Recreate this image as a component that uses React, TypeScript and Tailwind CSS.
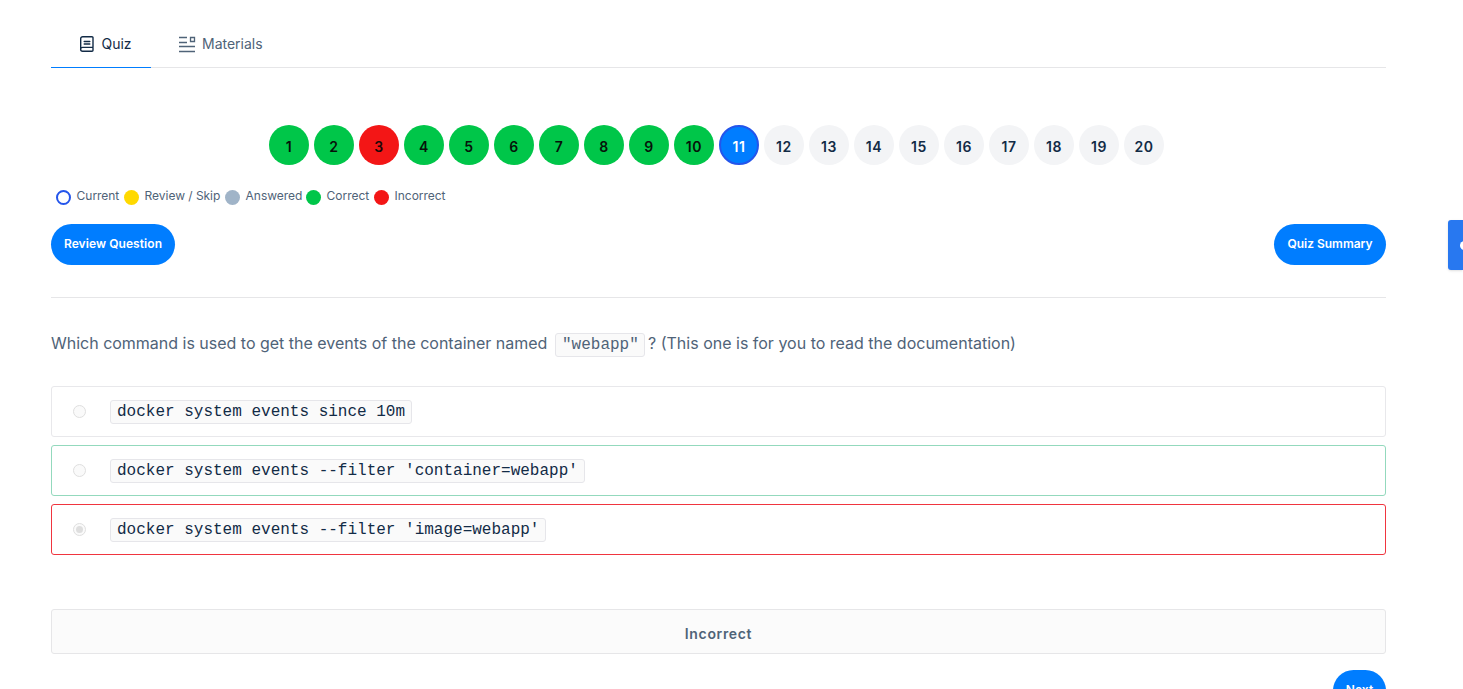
import React from "react";

type Status = "correct" | "incorrect" | "current" | "pending";

const statusOf = (n: number): Status =>
  n === 3 ? "incorrect" : n < 11 ? "correct" : n === 11 ? "current" : "pending";

const statusClass: Record<Status, string> = {
  correct: "bg-[#00c649] text-[#06120a]",
  incorrect: "bg-[#f31616] text-[#1c0808]",
  current: "bg-[#007dff] border-2 border-[#2455eb] text-white",
  pending: "bg-[#f3f4f6] text-[#122b46]",
};

const legend = [
  { label: "Current", dot: "border-2 border-[#2455eb]", width: "w-[42px]" },
  { label: "Review / Skip", dot: "bg-[#ffd900]", width: "w-[75px]" },
  { label: "Answered", dot: "bg-[#a0b4c8]", width: "w-[55px]" },
  { label: "Correct", dot: "bg-[#00c649]", width: "w-[42px]" },
  { label: "Incorrect", dot: "bg-[#f31616]", width: "w-[52px]" },
];

const options = [
  { code: "docker system events since 10m", border: "border-[#e8e8eb]", checked: false },
  { code: "docker system events --filter 'container=webapp'", border: "border-[#93d9bd]", checked: false },
  { code: "docker system events --filter 'image=webapp'", border: "border-[#f0353f]", checked: true },
];

function QuizIcon() {
  return (
    <svg width="16" height="18" viewBox="0 0 16 18" fill="none" stroke="currentColor" strokeWidth="1.4" strokeLinecap="round" strokeLinejoin="round">
      <path d="M14 12V2.7a1 1 0 0 0-1-1H3.7a2 2 0 0 0-2 2v10.8M14 12.4H3.6a1.95 1.95 0 0 0 0 3.9H13a1 1 0 0 0 1-1zM5.2 6.5h5.6M5.2 9h5.6" />
    </svg>
  );
}

function MaterialsIcon() {
  return (
    <svg width="17" height="18" viewBox="0 0 17 18" fill="none" stroke="currentColor" strokeWidth="1.3">
      <path d="M0 2.5h8M0 7.5h8M0 11.5h16M0 16.5h16M11.5 2.5h4v4h-4z" />
    </svg>
  );
}

export default function App() {
  return (
    <div className="flex h-[689px] w-full overflow-hidden bg-white pl-[51px] font-['Inter','Liberation_Sans',sans-serif] text-[#4f6378]">
      <main className="w-[1335px] shrink-0">
        <nav className="flex h-[68px] border-b border-[#e6e6e8] pt-5 text-sm leading-[22px]">
          <div className="flex h-12 w-[100px] items-center gap-[6.5px] border-b border-[#007dff] pl-7 text-[#122b46]">
            <QuizIcon />
            <span>Quiz</span>
          </div>
          <div className="flex h-12 items-center gap-[6px] pl-7">
            <MaterialsIcon />
            <span>Materials</span>
          </div>
        </nav>

        <div className="mt-[57px] flex gap-[5px] pl-[218px]">
          {Array.from({ length: 20 }, (_, i) => i + 1).map((n) => (
            <button
              key={n}
              className={`flex size-10 items-center justify-center rounded-full pt-[3px] text-sm font-semibold leading-5 tracking-[0.6px] ${statusClass[statusOf(n)]}`}
            >
              {n}
            </button>
          ))}
        </div>

        <div className="mt-[22px] flex h-[18px] gap-[5px] pl-[5px] text-xs leading-[18px] tracking-[-0.04px]">
          {legend.map((item) => (
            <div key={item.label} className="flex gap-[6px]">
              <span className={`mt-[3px] size-[15px] shrink-0 rounded-full ${item.dot}`} />
              <span className={`-ml-[0.4px] mr-[0.4px] whitespace-nowrap ${item.width}`}>{item.label}</span>
            </div>
          ))}
        </div>

        <div className="mt-[19px] flex justify-between border-b border-[#e6e6e8] pb-8 text-xs font-semibold text-white">
          <button className="h-[41px] w-[124px] whitespace-nowrap rounded-full bg-[#007dff] pb-px tracking-[0.07px]">Review Question</button>
          <button className="h-[41px] w-[112px] whitespace-nowrap rounded-full bg-[#007dff] pb-px">Quiz Summary</button>
        </div>

        <p className="mt-[33px] flex h-6 items-center text-base leading-6">
          <span className="w-[504px] whitespace-nowrap tracking-[-0.01px]">Which command is used to get the events of the container named</span>
          <code className="mt-[3px] h-6 w-[90px] rounded-[3px] border border-[#e6e6ea] bg-[#fafafa] px-[6px] font-['Liberation_Mono',monospace] leading-[22px]">"webapp"</code>
          <span className="ml-[3px] whitespace-nowrap">? (This one is for you to read the documentation)</span>
        </p>

        <div className="mt-[31px] flex flex-col gap-2">
          {options.map((o) => (
            <label key={o.code} className={`flex h-[51px] items-center rounded-[3px] border pl-[21px] ${o.border}`}>
              <span className="flex size-[13px] items-center justify-center rounded-full border border-[#dfdfdf] bg-[#fafafa]">
                {o.checked && <span className="size-[7px] rounded-full bg-[#dedede]" />}
              </span>
              <code className="ml-6 h-6 rounded-[3px] border border-[#e6e6ea] bg-[#fafafa] px-[6px] font-['Liberation_Mono',monospace] text-base leading-[22px] text-[#122b46]">{o.code}</code>
            </label>
          ))}
        </div>

        <div className="mt-[54px] flex h-[45px] items-center justify-center rounded-[3px] border border-[#e6e6e8] bg-[#fbfbfb] pt-[5px] text-sm font-semibold tracking-[0.65px]">
          Incorrect
        </div>
        <div className="mt-4 flex justify-end">
          <button className="h-[41px] w-[53px] rounded-full bg-[#007dff] pb-px text-xs font-semibold tracking-[0.1px] text-white">Next</button>
        </div>
      </main>
      <aside className="ml-[62px] mt-[220px] flex h-[50px] w-[15px] items-center justify-end overflow-hidden rounded-l-[3px] bg-[#2878f0] shadow">
        <svg width="3" height="9" viewBox="0 0 3 9" fill="#fff">
          <circle cx="4.5" cy="4.5" r="4.5" />
        </svg>
      </aside>
    </div>
  );
}
